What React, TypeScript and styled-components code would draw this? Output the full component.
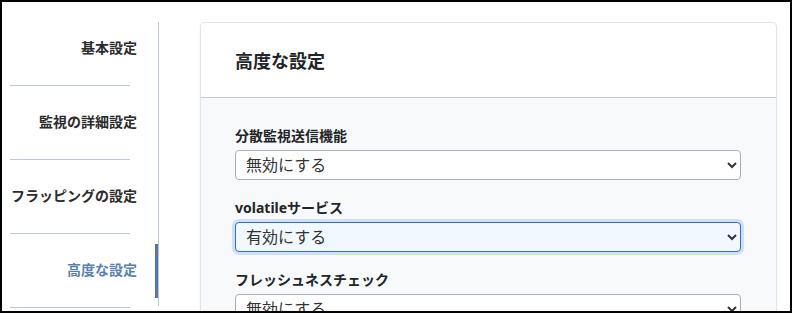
import styled, { createGlobalStyle } from 'styled-components';

const GlobalStyle = createGlobalStyle`
  html, body {
    margin: 0;
    padding: 0;
    background: #ffffff;
  }
  body {
    font-family: "Noto Sans", "Noto Sans CJK JP", sans-serif;
    color: #212529;
  }
`;

const Frame = styled.div`
  width: 792px;
  height: 313px;
  box-sizing: border-box;
  border: 2px solid #000;
  overflow: hidden;
  display: flex;
  align-items: flex-start;
  background: #fff;
`;

const Sidebar = styled.nav`
  position: relative;
  width: 157px;
  flex-shrink: 0;
  padding-top: 10px;

  &::after {
    content: '';
    position: absolute;
    top: 20px;
    bottom: 2px;
    right: 0;
    width: 1px;
    background: #b9c8d6;
  }
`;

const NavItem = styled.div<{ active?: boolean }>`
  position: relative;
  height: 73px;
  box-sizing: border-box;
  display: flex;
  align-items: center;
  justify-content: flex-end;
  padding: 0 22px 4px 0;
  font-size: 14px;
  font-weight: 700;
  color: ${p => (p.active ? '#5a7fb1' : '#2b2b2b')};
  white-space: nowrap;

  &::after {
    content: '';
    display: ${p => (p.active ? 'block' : 'none')};
    position: absolute;
    right: 1px;
    top: 10px;
    bottom: 9px;
    width: 3px;
    background: #5577a8;
  }
`;

const Divider = styled.div`
  height: 1px;
  margin: 0 29px 0 8px;
  background: #b9c8d6;
`;

const Card = styled.section`
  margin: 20px 0 0 41px;
  width: 577px;
  box-sizing: border-box;
  border: 1px solid #e1e4e8;
  border-radius: 5px;
  background: #fff;
  box-shadow: 0 1px 3px rgba(0, 0, 0, 0.06);
  overflow: hidden;
`;

const CardHeader = styled.header`
  height: 74px;
  display: flex;
  align-items: center;
  padding: 0 34px;
  border-bottom: 1px solid #c6cacf;
`;

const CardTitle = styled.h2`
  margin: 0;
  font-size: 18px;
  font-weight: 700;
  color: #212529;
`;

const CardBody = styled.div`
  background: #f8f9fb;
  padding: 28px 35px 40px 34px;
  display: flex;
  flex-direction: column;
  gap: 18px;
`;

const Field = styled.div`
  display: flex;
  flex-direction: column;
`;

const Label = styled.label`
  font-size: 14px;
  line-height: 20px;
  font-weight: 700;
  color: #212529;
  margin-bottom: 4px;
`;

const Select = styled.select<{ focused?: boolean }>`
  height: 30px;
  width: 100%;
  box-sizing: border-box;
  padding: 0 6px;
  font-family: "Noto Sans", "Noto Sans CJK JP", sans-serif;
  font-size: 16px;
  color: #333;
  border: 1px solid ${p => (p.focused ? '#2f6fcf' : '#a9aeb4')};
  border-radius: 4px;
  background-color: ${p => (p.focused ? '#f1f8ff' : '#ffffff')};
  box-shadow: ${p => (p.focused ? '0 0 0 3px #cfe0f5' : 'none')};
  outline: none;
`;

const navItems = ['基本設定', '監視の詳細設定', 'フラッピングの設定', '高度な設定'];

const fields = [
  { label: '分散監視送信機能', value: '無効にする' },
  { label: 'volatileサービス', value: '有効にする', focused: true },
  { label: 'フレッシュネスチェック', value: '無効にする' },
];

export default function App() {
  return (
    <>
      <GlobalStyle />
      <Frame>
        <Sidebar>
          {navItems.map((item, i) => (
            <div key={item}>
              <NavItem active={i === navItems.length - 1}>{item}</NavItem>
              <Divider />
            </div>
          ))}
        </Sidebar>
        <Card>
          <CardHeader>
            <CardTitle>高度な設定</CardTitle>
          </CardHeader>
          <CardBody>
            {fields.map(f => (
              <Field key={f.label}>
                <Label>{f.label}</Label>
                <Select focused={f.focused} defaultValue={f.value}>
                  <option>有効にする</option>
                  <option>無効にする</option>
                </Select>
              </Field>
            ))}
          </CardBody>
        </Card>
      </Frame>
    </>
  );
}
